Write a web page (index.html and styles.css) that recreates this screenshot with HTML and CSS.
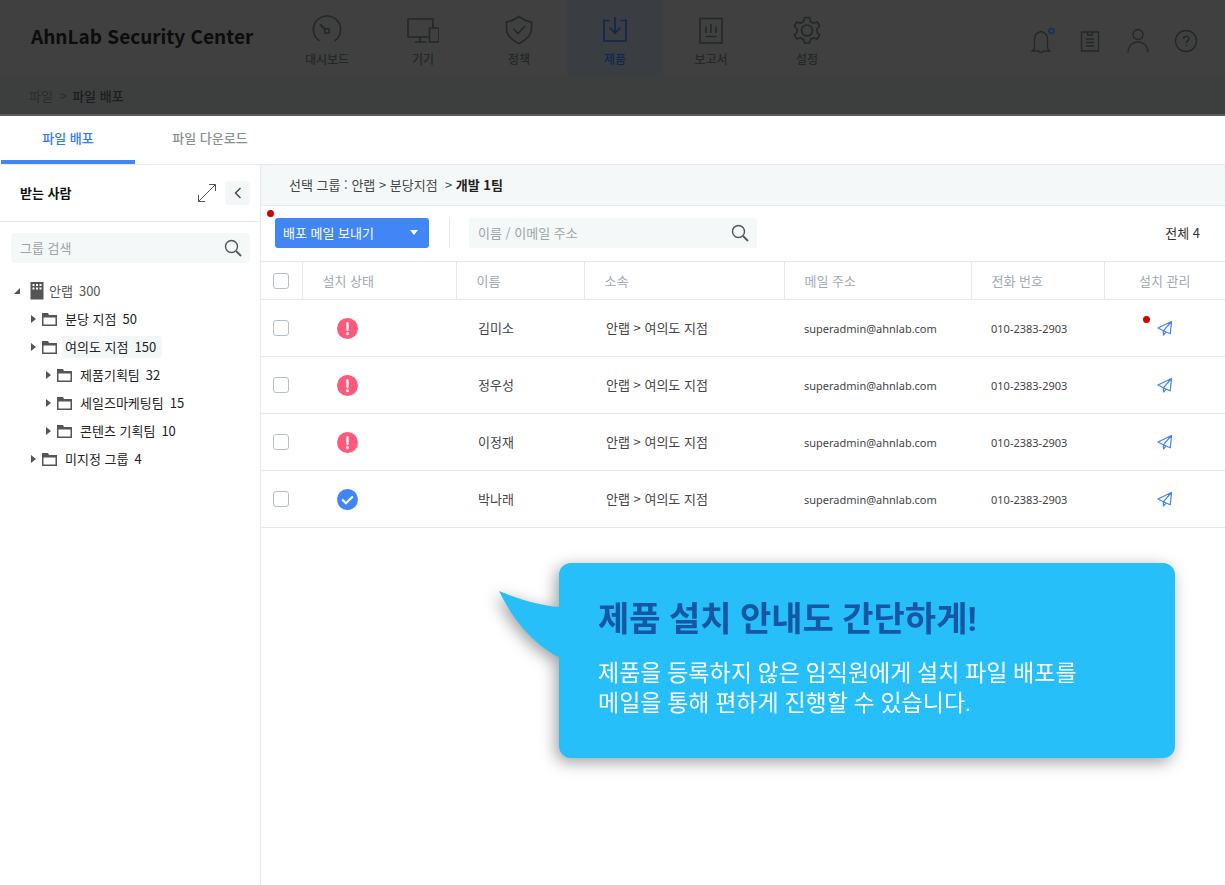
FILE: index.html
```
<!DOCTYPE html>
<html lang="ko">
<head>
<meta charset="utf-8">
<meta name="viewport" content="width=device-width, initial-scale=1">
<title>AhnLab Security Center</title>
<link rel="stylesheet" href="styles.css">
</head>
<body>
<svg class="sprite" aria-hidden="true">
  <symbol id="folder" viewBox="0 0 15 13"><path d="M0 0h6l1 2h8v11H0z" fill="#555"/><path d="M1.500 4.500h12v7h-12z" fill="#fff"/></symbol>
  <symbol id="arrow" viewBox="0 0 5 8"><path d="M0 0 5 4 0 8z" fill="#555"/></symbol>
  <symbol id="search" viewBox="0 0 18 18"><g fill="none" stroke="#555" stroke-width="1.400"><circle cx="7.500" cy="7.500" r="6"/><path d="m12 12 5 5" stroke-width="1.800"/></g></symbol>
  <symbol id="alert" viewBox="0 0 20 20"><circle cx="10" cy="10" r="10" fill="#fc5a7a"/><path d="M10 4.800v6.700" stroke="#fff" stroke-width="2.200" stroke-linecap="round"/><circle cx="10" cy="15" r="1.400" fill="#fff"/></symbol>
  <symbol id="done" viewBox="0 0 20 20"><circle cx="10" cy="10" r="10" fill="#4285f4"/><path d="m5 10 3.500 3.600L15 7.200" fill="none" stroke="#fff" stroke-width="2"/></symbol>
  <symbol id="send" viewBox="0 0 16 16"><path d="M14.500 1.500.9 8l5.400 2.800L9 12l4.300 1.800zL6.300 10.800 6.500 15 9 12" fill="none" stroke="#4285f4" stroke-width="1.200" stroke-linejoin="round"/></symbol>
</svg>

<header class="header">
  <a class="logo" href="#">AhnLab Security Center</a>
  <nav class="menu">
    <a class="menu-item" href="#"><svg class="menu-icon" viewBox="0 0 32 32"><path d="M8.300 26.800a13.600 13.600 0 1 1 15.400 0"/><circle cx="16" cy="17" r="2.400"/><path d="m14.200 15.200-5.200-4.700" stroke-width="2"/></svg>대시보드</a>
    <a class="menu-item" href="#"><svg class="menu-icon" viewBox="0 0 32 32"><path d="M22.500 23H1V5h25v9"/><path d="M22.500 14H32v14h-9.500zM13 23v4.500M8 28h11.500"/></svg>기기</a>
    <a class="menu-item" href="#"><svg class="menu-icon" viewBox="0 0 32 32"><path d="M16 2.500C12 5.500 8 7.500 3.500 8v7c0 6 5.500 11 12.500 14.500C23 26 28.500 21 28.500 15V8C24 7.500 20 5.500 16 2.500z"/><path d="m10.500 15 4.500 4.500 7-7.500"/></svg>정책</a>
    <a class="menu-item active" href="#"><svg class="menu-icon" viewBox="0 0 32 32"><path d="M10.500 6.500H5V27h22V6.500h-5.500M16 3v16M10.500 13.500 16 19l5.500-5.500"/></svg>제품</a>
    <a class="menu-item" href="#"><svg class="menu-icon" viewBox="0 0 32 32"><path d="M5 4.500h22V29H5zM10.500 22.500h11M11 12.500V19M16 10v9M21 12.500V19"/></svg>보고서</a>
    <a class="menu-item" href="#"><svg class="menu-icon" viewBox="0 0 32 32"><path d="M13.500 3.500h5l1 4 3 1.700 3.700-1.200 2.500 4-2.700 2.700v3.600l2.700 2.700-2.500 4-3.700-1.200-3 1.700-1 3.500h-5l-1-3.500-3-1.700L5.800 25l-2.500-4L6 18.300v-3.600L3.300 12l2.500-4 3.700 1.200 3-1.700z" stroke-linejoin="round"/><circle cx="16" cy="16.500" r="5.500"/></svg>설정</a>
  </nav>
  <div class="tools">
    <button class="tool" aria-label="알림"><svg viewBox="0 0 28 28"><path d="M6.500 21.500V12c0-4 2.500-6.500 6.500-7.500 4 1 6.500 3.500 6.500 7.500v9.500l2.500 2.500h-6.500c-1 2-4 2-5 0H4z"/><circle class="new" cx="23.500" cy="4" r="2.500"/></svg></button>
    <button class="tool" aria-label="목록"><svg viewBox="0 0 28 28"><path d="M5.500 5h17v19h-17zM11.500 5v3h5V5M10 12h8M10 15.500h8M10 19h8"/></svg></button>
    <button class="tool" aria-label="계정"><svg viewBox="0 0 28 28"><circle cx="14" cy="7.500" r="5"/><path d="M4 25.500c0-14 20-14 20 0"/></svg></button>
    <button class="tool" aria-label="도움말"><svg viewBox="0 0 28 28"><circle cx="14" cy="14" r="10.500"/><path d="M11.500 12c0-3.500 5.500-3.500 5.500-.5 0 2-2.500 2-2.500 4.500M14.500 17.500v1.800" stroke-width="1.600"/></svg></button>
  </div>
</header>
<div class="crumbs"><a href="#">파일</a><span>&gt;</span><b>파일 배포</b></div>

<nav class="tabs">
  <a class="tab selected" href="#">파일 배포</a>
  <a class="tab" href="#">파일 다운로드</a>
</nav>

<div class="page">
  <aside class="side">
    <div class="side-head">
      <h2>받는 사람</h2>
      <button class="expand" aria-label="확장"><svg viewBox="0 0 20 20"><path d="M12 1.500h6.500V8M8 18.500H1.500V12M18.500 1.500l-17 17" fill="none" stroke="#555"/></svg></button>
      <button class="fold" aria-label="접기"><svg viewBox="0 0 8 12"><path d="M6.500 1 1.500 6l5 5" fill="none" stroke="#444" stroke-width="1.400"/></svg></button>
    </div>
    <label class="search group-search"><input type="text" placeholder="그룹 검색" aria-label="그룹 검색"><svg><use href="#search"/></svg></label>
    <ul class="tree">
      <li class="root"><svg class="open" viewBox="0 0 6 6"><path d="M6 0v6H0z" fill="#555"/></svg><svg class="building" viewBox="0 0 14 18"><path d="M.5 0h13v17.500H.5z" fill="#555"/><path d="M2.500 2h2v2h-2zM6 2h2v2H6zM9.500 2h2v2h-2zM2.500 5.500h2v2h-2zM6 5.500h2v2H6zM9.500 5.500h2v2h-2z" fill="#fff"/></svg><span class="name">안랩<span>300</span></span></li>
      <li class="branch"><svg class="arrow"><use href="#arrow"/></svg><svg class="folder"><use href="#folder"/></svg><span class="name">분당 지점<span>50</span></span></li>
      <li class="branch"><svg class="arrow"><use href="#arrow"/></svg><svg class="folder"><use href="#folder"/></svg><span class="name current">여의도 지점<span>150</span></span></li>
      <li class="leaf"><svg class="arrow"><use href="#arrow"/></svg><svg class="folder"><use href="#folder"/></svg><span class="name">제품기획팀<span>32</span></span></li>
      <li class="leaf"><svg class="arrow"><use href="#arrow"/></svg><svg class="folder"><use href="#folder"/></svg><span class="name">세일즈마케팅팀<span>15</span></span></li>
      <li class="leaf"><svg class="arrow"><use href="#arrow"/></svg><svg class="folder"><use href="#folder"/></svg><span class="name">콘텐츠 기획팀<span>10</span></span></li>
      <li class="branch"><svg class="arrow"><use href="#arrow"/></svg><svg class="folder"><use href="#folder"/></svg><span class="name">미지정 그룹<span>4</span></span></li>
    </ul>
  </aside>

  <main class="main">
    <div class="path">선택 그룹 : 안랩 &gt; 분당지점 &nbsp;&gt;&nbsp;<b>개발 1팀</b></div>
    <div class="toolbar">
      <button class="mail">배포 메일 보내기<svg viewBox="0 0 8 5"><path d="M0 0h8L4 5z" fill="#fff"/></svg><i class="dot mail-dot"></i></button>
      <label class="search user-search"><input type="text" placeholder="이름 / 이메일 주소" aria-label="이름 / 이메일 주소"><svg><use href="#search"/></svg></label>
      <span class="total">전체 4</span>
    </div>
    <table class="users">
      <colgroup><col class="c-check"><col class="c-state"><col class="c-name"><col class="c-team"><col class="c-mail"><col class="c-phone"><col class="c-manage"></colgroup>
      <thead>
        <tr><th class="check"><input type="checkbox" aria-label="전체 선택"></th><th>설치 상태</th><th>이름</th><th>소속</th><th>메일 주소</th><th>전화 번호</th><th class="manage">설치 관리</th></tr>
      </thead>
      <tbody>
        <tr><td class="check"><input type="checkbox" aria-label="김미소"></td><td class="state"><svg><use href="#alert"/></svg></td><td class="text">김미소</td><td class="text">안랩 &gt; 여의도 지점</td><td class="latin">superadmin@ahnlab.com</td><td class="latin">010-2383-2903</td><td class="manage"><button class="send" aria-label="메일 보내기"><svg><use href="#send"/></svg><i class="dot send-dot"></i></button></td></tr>
        <tr><td class="check"><input type="checkbox" aria-label="정우성"></td><td class="state"><svg><use href="#alert"/></svg></td><td class="text">정우성</td><td class="text">안랩 &gt; 여의도 지점</td><td class="latin">superadmin@ahnlab.com</td><td class="latin">010-2383-2903</td><td class="manage"><button class="send" aria-label="메일 보내기"><svg><use href="#send"/></svg></button></td></tr>
        <tr><td class="check"><input type="checkbox" aria-label="이정재"></td><td class="state"><svg><use href="#alert"/></svg></td><td class="text">이정재</td><td class="text">안랩 &gt; 여의도 지점</td><td class="latin">superadmin@ahnlab.com</td><td class="latin">010-2383-2903</td><td class="manage"><button class="send" aria-label="메일 보내기"><svg><use href="#send"/></svg></button></td></tr>
        <tr><td class="check"><input type="checkbox" aria-label="박나래"></td><td class="state"><svg><use href="#done"/></svg></td><td class="text">박나래</td><td class="text">안랩 &gt; 여의도 지점</td><td class="latin">superadmin@ahnlab.com</td><td class="latin">010-2383-2903</td><td class="manage"><button class="send" aria-label="메일 보내기"><svg><use href="#send"/></svg></button></td></tr>
      </tbody>
    </table>
    <section class="callout">
      <svg class="tail" viewBox="0 0 61 67"><path d="M0 0c22 9 42 15 61 16v51C34 53 14 29 0 0z" fill="#26bffa"/></svg>
      <h1>제품 설치 안내도 간단하게!</h1>
      <p>제품을 등록하지 않은 임직원에게 설치 파일 배포를<br>메일을 통해 편하게 진행할 수 있습니다.</p>
    </section>
  </main>
</div>
</body>
</html>
```
FILE: styles.css
```
* { box-sizing: border-box; }
body {
  margin: 0;
  min-height: 100vh;
  display: flex;
  flex-direction: column;
  background: #fff;
  color: #333;
  font: 13px/20px "Noto Sans CJK KR", "Noto Sans", sans-serif;
}
a { color: inherit; text-decoration: none; }
button { padding: 0; border: 0; background: none; font: inherit; color: inherit; cursor: pointer; }
svg { display: block; flex: none; }
.sprite { position: absolute; width: 0; height: 0; }

.header { display: flex; height: 76px; background: #404040; color: #222827; }
.logo { width: 279px; padding: 20px 0 0 31px; font-size: 19px; line-height: 32px; font-weight: 700; color: #0c0c0c; white-space: nowrap; }
.menu { display: flex; }
.menu-item { display: flex; flex-direction: column; align-items: center; width: 96px; padding-top: 14px; font-size: 12px; line-height: 20px; font-weight: 500; gap: 3px; }
.menu-item.active { background: #3a3e42; color: #10264d; }
.menu-icon { width: 32px; height: 32px; fill: none; stroke: currentColor; stroke-width: 1.6; }
.tools { display: flex; align-items: center; gap: 20px; margin-left: auto; padding: 5px 25px 0 0; }
.tool { width: 28px; height: 28px; }
.tool svg { width: 28px; height: 28px; fill: none; stroke: currentColor; stroke-width: 1.3; }
.tool .new { stroke: #152f60; stroke-width: 1.6; }
.crumbs { display: flex; align-items: center; height: 40px; padding: 2px 0 0 29px; background: #3d3f3f; border-bottom: 2px solid #5a5b5c; color: #292b2c; }
.crumbs span { margin: 0 5px 0 7px; }
.crumbs b { font-weight: 500; color: #1b1c22; }

.tabs { display: flex; height: 49px; padding-left: 1px; border-bottom: 1px solid #e8eaec; }
.tab { display: flex; justify-content: center; width: 150px; padding-top: 12px; color: #899292; font-weight: 500; }
.tab.selected { width: 134px; color: #3479f0; border-bottom: 4px solid #4285f4; }

.page { display: flex; flex: 1; }
.side { width: 261px; flex: none; border-right: 1px solid #e6e8ea; }
.side-head { display: flex; align-items: center; height: 57px; padding: 0 10px 0 20px; border-bottom: 1px solid #e6e8ea; }
.side-head h2 { margin: 0 auto 0 0; font-size: 13px; font-weight: 700; color: #111; }
.expand svg { width: 20px; height: 20px; }
.expand { margin-right: 8px; }
.fold { display: flex; align-items: center; justify-content: center; width: 25px; height: 24px; border-radius: 3px; background: #f3f7f8; }
.fold svg { width: 8px; height: 12px; }
.search { display: flex; align-items: center; height: 30px; padding: 0 8px 0 9px; background: #f4f8f9; border-radius: 3px; }
.search input { flex: 1; min-width: 0; padding: 0; border: 0; outline: 0; background: none; font: inherit; color: #333; }
.search input::placeholder { color: #9ca4a7; opacity: 1; }
.search svg { width: 18px; height: 18px; }
.group-search { margin: 11px 10px 14px 11px; }

.tree { margin: 0; padding: 0; list-style: none; color: #222; }
.tree li { display: flex; align-items: center; height: 28px; }
.root { padding-left: 14px; color: #555; }
.branch { padding-left: 31px; }
.leaf { padding-left: 46px; }
.open { width: 6px; height: 6px; margin-right: 10px; }
.building { width: 14px; height: 18px; margin-right: 2px; }
.arrow { width: 5px; height: 8px; margin-right: 6px; }
.folder { width: 15px; height: 13px; margin-right: 5px; }
.name { padding: 1px 6px 1px 3px; border-radius: 3px; }
.name.current { background: #f3f7f8; }
.name span { margin-left: 6px; }

.main { position: relative; flex: 1; min-width: 0; }
.path { height: 41px; padding: 10px 28px; background: #f4f8f9; border-bottom: 1px solid #e8eaec; color: #444; }
.path b { font-weight: 700; color: #222; }
.toolbar { display: flex; align-items: center; height: 55px; padding: 0 25px 2px 14px; }
.mail { position: relative; display: flex; align-items: center; justify-content: space-between; width: 154px; height: 30px; padding: 0 11px 0 8px; border-radius: 3px; background: #4285f4; color: #fff; }
.mail svg { width: 8px; height: 5px; }
.dot { position: absolute; width: 7px; height: 7px; border-radius: 50%; background: #d40000; }
.mail-dot { top: -8px; left: -8px; }
.user-search { position: relative; width: 288px; margin-left: 40px; }
.user-search::before { content: ""; position: absolute; left: -20px; top: 0; width: 1px; height: 30px; background: #e4e6e8; }
.total { margin-left: auto; }

.users { width: 100%; table-layout: fixed; border-collapse: collapse; border-top: 1px solid #e6e8ea; }
.c-check { width: 41px; }
.c-state { width: 154px; }
.c-name { width: 128px; }
.c-team { width: 200px; }
.c-mail { width: 187px; }
.c-phone { width: 133px; }
.c-manage { width: 121px; }
.users th { height: 38px; padding: 0 0 0 20px; border-right: 1px solid #e6e8ea; border-bottom: 1px solid #e6e8ea; color: #a2a8b6; font-weight: 400; text-align: left; }
.users th:last-child { border-right: 0; }
.users td { height: 57px; padding: 0 0 0 20px; border-bottom: 1px solid #e6e8ea; color: #444; }
.users td.text { padding-left: 22px; }
.users td.latin { padding-top: 2px; font-family: "Noto Sans", sans-serif; font-size: 11px; }
.users .check { padding: 0 0 0 12px; }
.users .manage { padding: 0; text-align: center; }
.users td.manage { padding-bottom: 2px; }
.check input { appearance: none; display: block; width: 16px; height: 16px; margin: 0; border: 1px solid #b4c0c8; border-radius: 3px; background: #fff; }
.users td.state { padding-left: 35px; }
.state svg { width: 21px; height: 21px; }
.send { position: relative; display: inline-block; vertical-align: middle; }
.send svg { width: 16px; height: 16px; }
.send-dot { left: -14px; top: -4px; }

.callout { position: absolute; top: 398px; left: 298px; right: 50px; padding: 32px 39px 39px; border-radius: 12px; background: #26bffa; color: #fff; font-family: Roboto, "Noto Sans CJK KR", sans-serif; filter: drop-shadow(-3px 4px 8px rgba(0, 0, 0, .38)); }
.tail { position: absolute; left: -60px; top: 28px; width: 61px; height: 67px; }
.callout h1 { margin: 0 0 16px; font-size: 34px; line-height: 48px; font-weight: 700; color: #1557a5; }
.callout p { margin: 0; font-size: 23px; line-height: 30px; }
```
